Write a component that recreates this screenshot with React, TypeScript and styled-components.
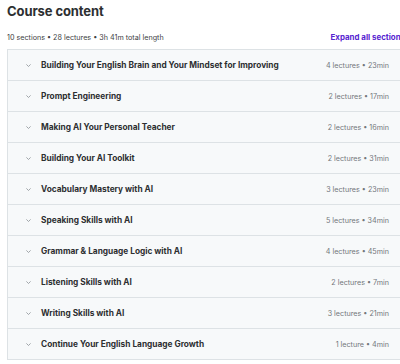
import React from "react";
import styled, { createGlobalStyle } from "styled-components";

const GlobalStyle = createGlobalStyle`
	html, body {
		margin: 0;
		padding: 0;
		background: #ffffff;
		overflow: hidden;
	}
	* {
		box-sizing: border-box;
	}
`;

// --- page wrapper ---
const Page = styled.div`
	width: 400px;
	height: 364px;
	overflow: hidden;
	font-family: Inter, "Noto Sans", sans-serif;
	color: #2d2f31;
`;

const Content = styled.div`
	width: 398px;
	margin-left: 7px;
	padding-top: 1px;
`;

const Title = styled.h2`
	margin: 0;
	font-size: 13px;
	line-height: 20px;
	font-weight: 700;
	letter-spacing: -0.1px;
	color: #2d2f31;
`;

// --- summary line ---
const HeaderRow = styled.div`
	display: flex;
	align-items: center;
	justify-content: space-between;
	margin-top: 9px;
	height: 14px;
`;

const Summary = styled.div`
	font-size: 7.2px;
	color: #3e4143;
	white-space: nowrap;
`;

const ExpandLink = styled.button`
	border: none;
	background: none;
	padding: 0;
	font-family: inherit;
	font-size: 7.9px;
	font-weight: 700;
	color: #5624d0;
	white-space: nowrap;
	cursor: pointer;
`;

// --- sections list ---
const SectionList = styled.div`
	margin-top: 5px;
	border: 1px solid #dde2e5;
	border-bottom: none;
`;

const SectionRow = styled.div`
	display: flex;
	align-items: center;
	height: 31px;
	padding: 0 15px 0 18px;
	background: #f7f9fa;
	border-bottom: 1px solid #dde2e5;
`;

const Chevron = styled.svg`
	width: 5px;
	height: 3px;
	flex: none;
	margin-right: 10px;
`;

const SectionTitle = styled.div`
	flex: 1;
	font-size: 8.3px;
	font-weight: 700;
	color: #2d2f31;
	white-space: nowrap;
`;

const SectionMeta = styled.div`
	font-size: 7.2px;
	color: #73777b;
	white-space: nowrap;
`;

const sections = [
	{ title: "Building Your English Brain and Your Mindset for Improving", meta: "4 lectures • 23min" },
	{ title: "Prompt Engineering", meta: "2 lectures • 17min" },
	{ title: "Making AI Your Personal Teacher", meta: "2 lectures • 16min" },
	{ title: "Building Your AI Toolkit", meta: "2 lectures • 31min" },
	{ title: "Vocabulary Mastery with AI", meta: "3 lectures • 23min" },
	{ title: "Speaking Skills with AI", meta: "5 lectures • 34min" },
	{ title: "Grammar & Language Logic with AI", meta: "4 lectures • 45min" },
	{ title: "Listening Skills with AI", meta: "2 lectures • 7min" },
	{ title: "Writing Skills with AI", meta: "3 lectures • 21min" },
	{ title: "Continue Your English Language Growth", meta: "1 lecture • 4min" },
];

export default function App() {
	return (
		<Page>
			<GlobalStyle />
			<Content>
				<Title>Course content</Title>
				<HeaderRow>
					<Summary>10 sections • 28 lectures • 3h 41m total length</Summary>
					<ExpandLink>Expand all sections</ExpandLink>
				</HeaderRow>
				<SectionList>
					{sections.map((s, i) => (
						<SectionRow key={i}>
							<Chevron viewBox="0 0 5 3">
								<polyline points="0.4,0.4 2.5,2.5 4.6,0.4" fill="none" stroke="#8a9095" strokeWidth="0.8" />
							</Chevron>
							<SectionTitle>{s.title}</SectionTitle>
							<SectionMeta>{s.meta}</SectionMeta>
						</SectionRow>
					))}
				</SectionList>
			</Content>
		</Page>
	);
}
